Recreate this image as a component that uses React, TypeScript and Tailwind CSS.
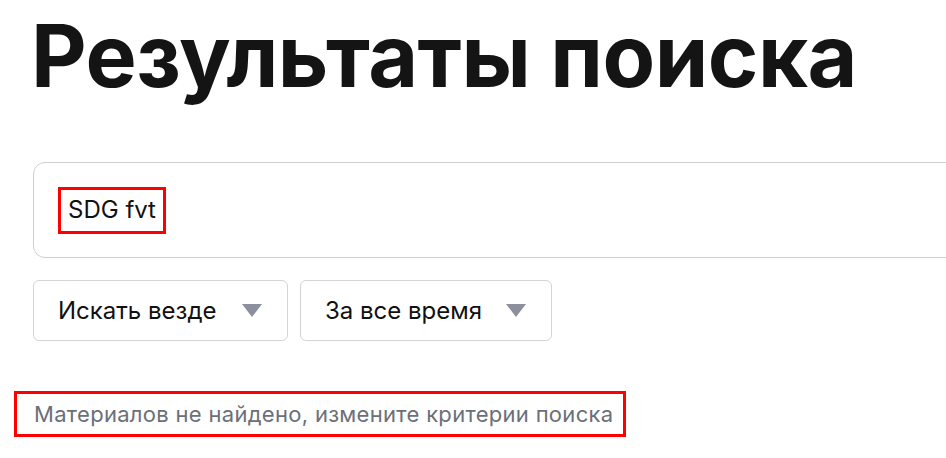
import React from 'react';

const Caret = () => (
  <svg width="20" height="13" viewBox="0 0 20 13" className="shrink-0">
    <path d="M0 0 H20 L10 13 Z" fill="#8b909c" />
  </svg>
);

const Select = ({ label, width }: { label: string; width: string }) => (
  <div className={`${width} h-[61px] flex items-center justify-between pl-[24px] pr-[25px] bg-white border border-[#d3d4d8] rounded-[6px]`}>
    <span className="text-[24px] leading-none text-[#111]">{label}</span>
    <Caret />
  </div>
);

export default function App() {
  return (
    <div
      className="w-[946px] h-[458px] overflow-hidden bg-white"
      style={{ fontFamily: 'Inter, "Noto Sans", sans-serif' }}
    >
      <div className="pl-[33px] pt-[6px]">
        <h1 className="text-[86px] font-bold leading-[100px] tracking-[-0.5px] text-[#141414] ml-[-2px]">
          Результаты поиска
        </h1>

        <div className="mt-[56px] w-[940px] h-[96px] flex items-center pl-[24px] border border-[#cfcfd2] rounded-[12px]">
          <div className="border-[3px] border-[#ff0000] px-[7px] h-[47px] flex items-center">
            <span className="text-[24px] leading-none text-[#111]">SDG fvt</span>
          </div>
        </div>

        <div className="mt-[22px] flex gap-[12px]">
          <Select label="Искать везде" width="w-[255px]" />
          <Select label="За все время" width="w-[252px]" />
        </div>
      </div>

      <div className="mt-[50px] ml-[14px] w-[612px] h-[46px] border-[3px] border-[#ff0000] flex items-center pl-[17px]">
        <span className="text-[22px] leading-none tracking-[0.3px] text-[#6b6f78]">Материалов не найдено, измените критерии поиска</span>
      </div>
    </div>
  );
}
